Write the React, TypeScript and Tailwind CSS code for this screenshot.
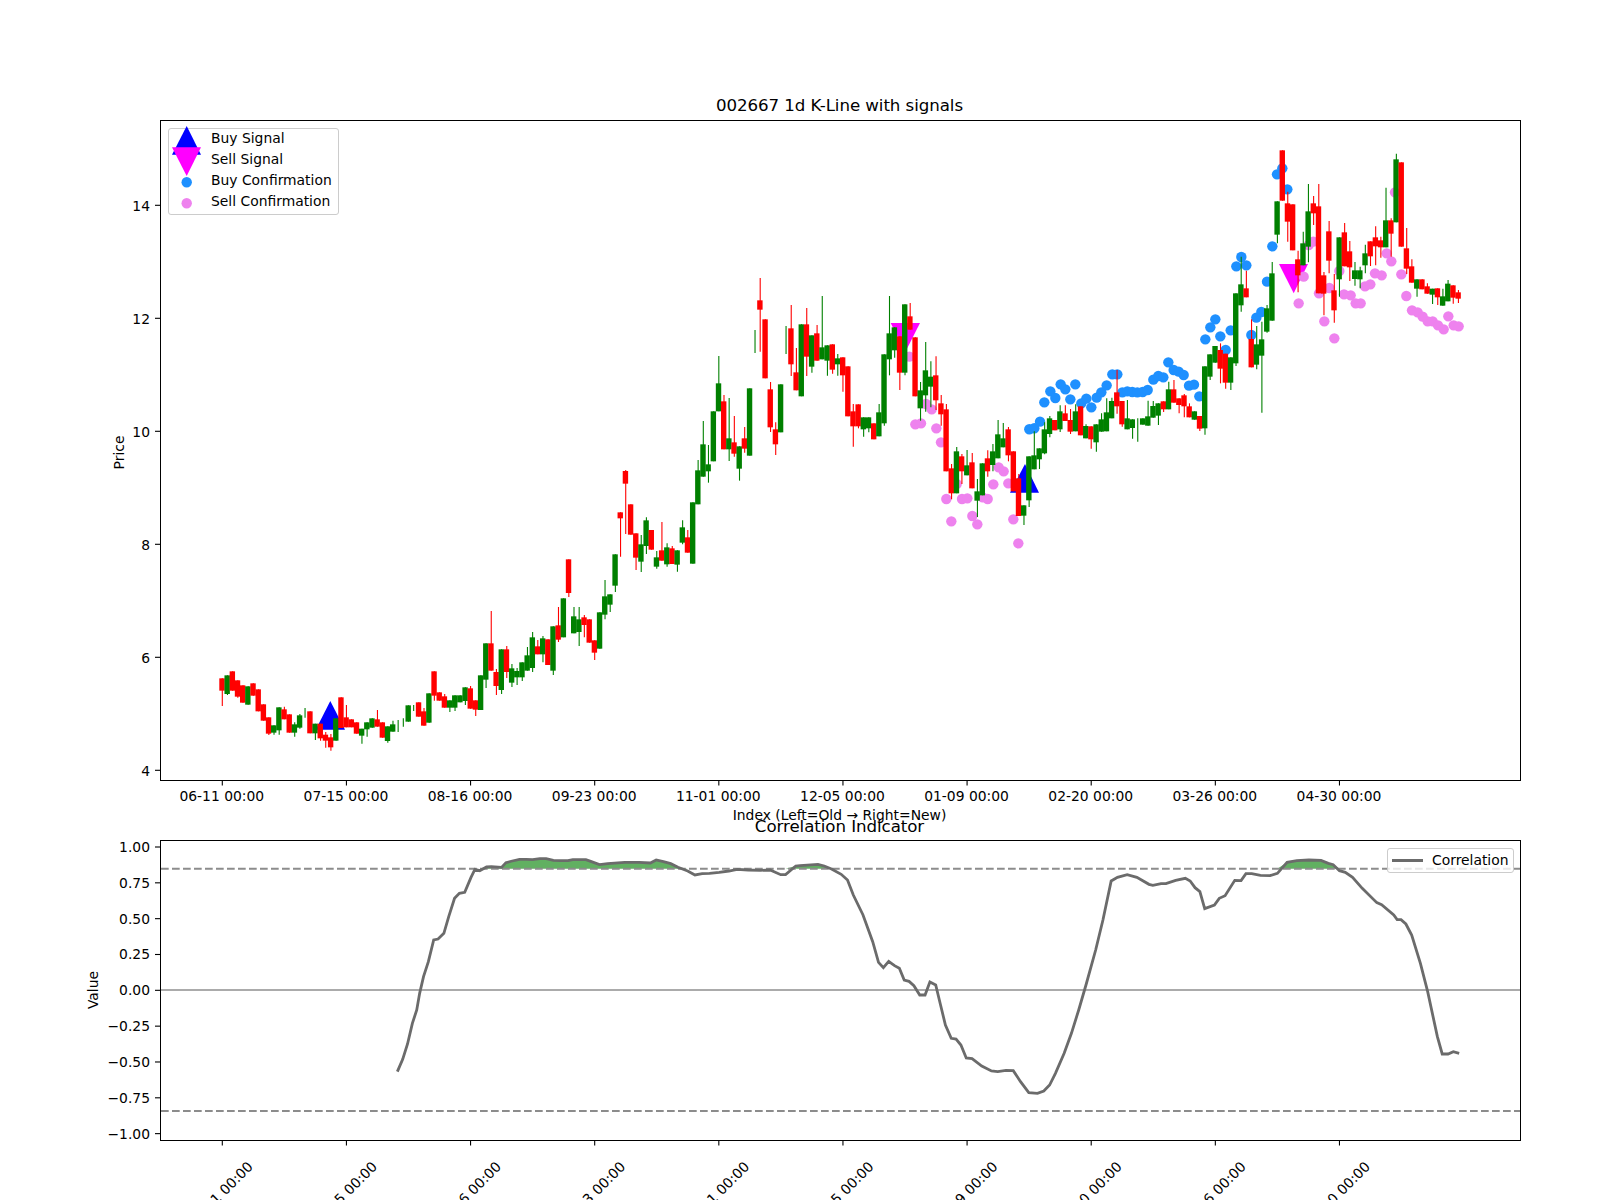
type Bar = [string, number, number, number, number];

// readings per crop: colour, body top, body bottom, wick top, wick bottom (0 = wick ends at the body)
const BARS_A: Bar[] = [
  ['r',715,752,0,798],['g',706,762,0,765],['r',694,752,0,0],['r',721,770,0,773],['r',736,788,0,0],['g',739,794,0,0],
  ['r',730,767,0,0],['r',748,814,0,0],['r',793,842,0,0],['r',832,881,0,885],['g',856,878,0,884],['g',802,871,0,884],
  ['r',808,838,800,0],['r',823,878,0,0],['g',853,878,847,890],['g',826,863,822,866],['g',0,0,804,833],['r',814,880,0,0],
  ['g',851,880,0,900],['r',851,895,0,902],['r',884,902,876,923],['r',892,922,882,932],['g',835,902,0,0],['r',772,864,0,0],
  ['r',832,862,795,0],['r',838,862,0,0],['r',847,881,0,0],['g',866,887,0,911],['g',847,868,0,890],['g',835,863,0,0],
  ['r',838,860,810,0],['r',847,893,0,0],['g',859,903,0,908],['g',853,875,842,0],['g',0,0,840,876],['g',0,0,835,860],
  ['g',796,845,0,0],['g',0,0,795,813],['r',787,830,0,0],['r',814,857,804,0],['g',760,848,0,0],['r',694,767,0,782],
  ['r',757,782,0,0],['r',769,803,762,0],['g',781,803,0,816],['g',766,803,0,813],['g',766,787,0,0],['g',742,783,0,795],
  ['r',745,806,738,0],['r',781,809,0,828],['g',706,810,0,0],['g',610,719,0,744],['r',610,692,513,0],['r',696,738,687,765],
  ['g',628,750,0,762],['r',628,696,618,714],['g',685,728,672,741],['g',693,712,684,735],['g',667,712,0,723],['g',646,692,621,0],
  ['g',592,684,576,696],['r',619,643,600,0],['g',595,643,588,667],['r',598,675,0,0],['g',559,692,0,705],['r',556,599,501,606],
  ['g',475,592,0,0],['r',358,459,0,471],['g',529,580,501,0],['g',538,576,501,618],['r',532,555,525,592],['r',538,608,0,0],
  ['r',601,638,0,660],['g',517,626,0,0],['g',469,524,420,538],['g',463,494,0,516],['g',343,437,0,456],['r',217,235,0,350],
  ['r',93,131,90,282],['r',193,284,0,0],['r',280,353,0,390],['g',313,365,285,396],['g',241,318,232,342],['r',270,329,0,0],
];

const BARS_B: Bar[] = [
  ['g',892,920,873,926],['r',871,902,786,0],['g',862,913,850,920],['r',865,912,858,0],['g',871,914,0,935],['g',802,848,781,853],
  ['r',832,878,810,0],['g',727,911,0,0],['g',631,733,600,0],['g',553,650,483,0],['g',613,634,555,668],['g',454,604,0,0],
  ['g',370,454,288,0],['r',424,568,405,0],['g',535,568,414,603],['r',547,581,468,590],['g',559,626,0,662],['r',535,566,501,578],
  ['g',385,587,0,0],['g',0,0,210,279],['r',121,149,54,275],['r',178,355,0,0],['r',388,502,366,516],['r',508,553,487,585],
  ['g',373,517,0,0],['g',0,0,198,282],['r',205,313,135,348],['r',337,391,264,0],['g',193,409,0,0],['r',193,290,144,348],
  ['g',226,320,0,338],['r',220,302,195,0],['g',262,298,108,0],['g',256,302,0,347],['r',253,329,0,341],['g',295,313,282,347],
  ['r',292,346,0,395],['r',319,469,0,0],['r',454,499,432,560],['r',433,499,0,505],['g',472,508,0,530],['g',472,505,0,517],
  ['r',490,538,0,0],['g',457,529,432,0],['g',283,490,0,497],['g',220,298,108,346],['g',202,271,0,293],['r',229,338,0,390],
  ['g',133,338,0,346],['r',169,209,129,0],['r',232,409,0,0],['g',391,445,366,482],['g',331,406,246,455],['g',350,380,304,442],
  ['r',346,421,289,450],['r',430,463,405,497],['r',448,634,432,0],['r',625,700,612,718],['g',574,700,561,0],['r',589,634,582,672],
  ['g',616,646,570,0],['r',607,685,579,0],['g',694,722,657,771],['g',610,706,0,0],['r',595,634,571,650],['g',574,615,552,634],
  ['g',523,595,480,0],['g',535,562,489,0],['r',508,586,501,604],['r',574,694,0,0],['r',655,768,642,0],['g',736,767,0,795],
  ['g',589,721,0,741],['g',586,628,514,0],['g',565,598,0,627],['g',508,580,487,583],
];

const BARS_C: Bar[] = [
  ['g',865,912,858,922],['r',870,901,0,0],['g',844,898,826,906],['r',850,873,826,0],['r',870,905,837,912],['g',844,904,823,0],
  ['r',829,916,0,0],['g',888,925,883,0],['r',889,928,0,956],['g',883,937,0,965],['g',868,905,850,0],['g',847,904,805,0],
  ['g',813,865,803,0],['r',787,829,720,851],['r',813,883,0,890],['g',865,898,810,0],['g',868,894,0,926],['g',0,0,865,935],
  ['g',865,884,0,0],['g',859,887,812,0],['g',828,863,813,0],['g',820,857,0,885],['r',814,838,0,846],['g',778,838,755,0],
  ['r',778,818,750,0],['r',805,825,0,850],['r',796,829,792,862],['r',829,862,820,0],['g',844,869,0,0],['r',858,896,0,903],
  ['g',709,895,0,914],['g',673,740,0,750],['g',648,698,0,0],['r',660,716,640,760],['r',671,758,0,776],['g',682,758,0,780],
  ['g',490,700,0,708],['g',463,526,380,545],['r',475,502,422,0],['r',627,712,568,0],['g',643,704,588,718],['g',628,677,575,848],
  ['g',535,605,525,608],['g',430,572,396,0],['g',214,314,0,340],['r',61,212,0,0],['r',220,275,185,335],['r',223,361,0,0],
  ['r',388,436,362,487],['g',340,406,305,0],['g',244,350,162,397],['r',220,250,198,285],['r',229,490,162,0],['r',436,491,426,556],
  ['r',304,392,273,430],['r',481,541,432,578],['g',322,448,0,500],['r',307,409,279,0],['r',364,412,333,453],['g',421,447,396,467],
  ['g',421,448,410,475],['g',370,406,344,430],['r',334,379,0,408],['r',322,349,289,406],['r',331,352,320,383],['g',271,352,173,0],
  ['r',271,311,265,380],['g',88,277,71,0],['r',97,350,0,0],['r',355,416,294,432],['r',409,458,388,0],['g',448,476,0,500],
  ['r',448,478,0,0],['r',469,491,460,0],['g',476,494,0,522],['r',475,502,0,525],['g',499,527,476,0],['g',461,514,450,0],
  ['r',466,503,0,521],['r',487,506,480,519],
];

const fromCrop = (rows: Bar[], top: number): Bar[] =>
  rows.map(([c, a, b, w1, w2]) => {
    const y = (v: number) => top + v / 3;
    return [c, y(a), y(b), y(w1 || a), y(w2 || b)];
  });

const bars = [...fromCrop(BARS_A, 440), ...fromCrop(BARS_B, 260), ...fromCrop(BARS_C, 130)];
const barX = (i: number) => 222.3 + (124.13 / 24) * i;

const BLUE_DOTS: number[][] = [
  [1029.3,429.3],[1034.3,428.3],
  ...[[0,875],[13,817],[31,784],[46,804],[62,763],[76,778],[91,808],[106,763],[124,820],[139,806],[154,832],[170,803],[184,787],[200,766],
    [217,733],[232,733],[247,787],[262,784],[277,786],[292,787],[308,786],[323,780],[340,749],[355,738],[370,742],[385,697],[401,720],[416,725],
    [431,735],[447,767],[462,764],[478,799],[496,628],[511,592],[526,568],[541,619],[557,660],[572,601],[589,409],[604,381],[619,406],[634,615],
    [649,563],[664,546],[681,455],[697,349],[711,133],[727,115],[742,178]].map(([x, y]) => [1040 + x / 3, 130 + y / 3]),
];

const VIOLET_DOTS: number[][] = [
  ...[[808,290],[858,432],[875,448],[826,493],[843,490],[889,505],[903,547],[919,717],[950,672],[934,784],[966,717],[982,715],[997,768],[1012,793],
    [1028,712],[1043,717],[1060,673],[1076,622],[1091,634],[1105,670],[1120,778],[1135,850]].map(([x, y]) => [640 + x / 3, 260 + y / 3]),
  ...[[791,440],[776,520],[806,345],[820,335],[837,490],[853,574],[868,474],[883,625],[898,423],[912,493],[932,496],[947,520],[962,520],[975,469],
    [991,463],[1005,430],[1025,436],[1040,370],[1054,394],[1065,187],[1084,433],[1099,498],[1116,541],[1133,547],[1148,560],[1163,574],[1178,574],
    [1194,586],[1211,598],[1225,559],[1241,586],[1256,589]].map(([x, y]) => [1040 + x / 3, 130 + y / 3]),
];

const CORR_LEFT = [
  [696,755],[707,718],[717,672],[727,610],[736,570],[742,520],[750,470],[760,425],[771,360],[780,357],[792,340],[802,290],[814,235],[824,220],[835,217],
  [848,172],[856,148],[866,152],[880,141],[890,140],[911,142],[920,128],[933,123],[948,118],[962,118],[975,119],[990,116],[1003,116],[1018,121],[1034,122],
  [1048,122],[1058,119],[1085,119],[1095,124],[1113,134],[1130,131],[1165,127],[1195,127],[1218,129],[1230,120],[1245,125],[1260,131],[1275,142],[1295,153],
  [1310,165],[1325,161],[1340,160],[1360,157],[1380,153],[1397,148],[1420,150],[1445,151],[1465,150],[1487,164],[1497,164],[1518,138],
];

const CORR_RIGHT = [
  [0,137],[37,133],[50,138],[65,147],[85,163],[98,180],[110,225],[130,285],[150,365],[162,427],[172,443],[183,424],[195,437],[205,445],[215,480],[225,484],
  [235,497],[247,525],[258,525],[268,486],[280,495],[290,555],[300,615],[312,655],[322,657],[332,675],[343,714],[355,716],[375,738],[395,753],[408,755],
  [425,751],[440,752],[455,785],[472,818],[490,820],[503,813],[515,795],[527,760],[545,700],[560,640],[575,570],[590,495],[610,390],[625,300],[642,183],
  [655,172],[675,164],[695,172],[720,193],[728,196],[745,191],[755,191],[775,181],[795,175],[805,183],[815,203],[825,215],[835,266],[855,255],[865,235],
  [877,227],[897,181],[910,182],[920,161],[932,161],[950,166],[970,167],[985,160],[1005,127],[1025,122],[1050,120],[1075,121],[1090,130],[1100,134],[1113,152],
  [1125,157],[1140,172],[1160,205],[1190,248],[1200,254],[1225,285],[1232,299],[1240,299],[1250,312],[1262,345],[1280,430],[1295,515],[1315,650],[1325,702],
  [1337,702],[1348,695],[1360,700],
];

const SCALE_X = 1568 / 760;
const corr = [
  ...CORR_LEFT.map(([x, y]) => [60 + x / SCALE_X, 820 + y / 3]),
  ...CORR_RIGHT.map(([x, y]) => [800 + x / SCALE_X, 820 + y / 3]),
];
const HIGH_Y = 868.8;
const LOW_Y = 1111;
const corrLine = corr.map(([x, y]) => `${x},${y}`).join(' ');
const corrFill = corr.map(([x, y]) => `${x},${Math.min(y, HIGH_Y)}`).join(' ');

const DATES = ['06-11', '07-15', '08-16', '09-23', '11-01', '12-05', '01-09', '02-20', '03-26', '04-30'];
const tickX = (i: number) => 222.3 + 124.13 * i;
const PRICE_TICKS = [14, 12, 10, 8, 6, 4];
const VALUE_TICKS = ['1.00', '0.75', '0.50', '0.25', '0.00', '−0.25', '−0.50', '−0.75', '−1.00'];

function CandleChart() {
  return (
    <svg className="block overflow-visible" width={1359} height={659} viewBox="161 121 1359 659">
      <polygon points="315.7,729.7 345,729.7 330.3,701" fill="#0000ff" />
      <polygon points="1010,492.7 1039,492.7 1025,464" fill="#0000ff" />
      <polygon points="890.7,323 920,323 905.3,352" fill="#ff00ff" />
      <polygon points="1279,264 1308,264 1293.7,293.3" fill="#ff00ff" />
      {BLUE_DOTS.map(([x, y], i) => <circle key={i} cx={x} cy={y} r={5.2} fill="#1e90ff" />)}
      {VIOLET_DOTS.map(([x, y], i) => <circle key={i} cx={x} cy={y} r={5.2} fill="#ee82ee" />)}
      {bars.map(([c, top, bot, w1, w2], i) => {
        const color = c === 'r' ? '#ff0000' : '#008000';
        return (
          <g key={i}>
            <line x1={barX(i)} x2={barX(i)} y1={w1} y2={w2} stroke={color} strokeWidth={1.1} />
            {bot > top && <rect x={barX(i) - 3} y={top} width={5.4} height={bot - top} fill={color} />}
          </g>
        );
      })}
      {DATES.map((d, i) => (
        <g key={d}>
          <line x1={tickX(i)} x2={tickX(i)} y1={780.5} y2={785.5} stroke="#000" strokeWidth={1.1} />
          <text x={tickX(i) - 0.5} y={801} textAnchor="middle" fontSize={13.89}>{d} 00:00</text>
        </g>
      ))}
      {PRICE_TICKS.map((p) => {
        const y = 770.3 - (p - 4) * 56.5;
        return (
          <g key={p}>
            <line x1={155} x2={160} y1={y} y2={y} stroke="#000" strokeWidth={1.1} />
            <text x={150} y={y + 5.5} textAnchor="end" fontSize={13.89}>{p}</text>
          </g>
        );
      })}
      <text transform="translate(124 452.5) rotate(-90)" textAnchor="middle" fontSize={13.89}>Price</text>
    </svg>
  );
}

function CorrelationChart() {
  return (
    <svg className="block overflow-visible" width={1359} height={299} viewBox="161 841 1359 299">
      <polygon points={corrFill} fill="#008000" fillOpacity={0.62} />
      <line x1={161} x2={1520} y1={HIGH_Y} y2={HIGH_Y} stroke="#8c8c8c" strokeWidth={2} strokeDasharray="7.7 3.3" />
      <line x1={161} x2={1520} y1={LOW_Y} y2={LOW_Y} stroke="#8c8c8c" strokeWidth={2} strokeDasharray="7.7 3.3" />
      <line x1={161} x2={1520} y1={990} y2={990} stroke="#ababab" strokeWidth={2} />
      <polyline points={corrLine} fill="none" stroke="#6b6b6b" strokeWidth={2.8} />
      {DATES.map((d, i) => (
        <g key={d}>
          <line x1={tickX(i)} x2={tickX(i)} y1={1140.5} y2={1145.5} stroke="#000" strokeWidth={1.1} />
          <text transform={`translate(${tickX(i) - 2} 1194) rotate(-45)`} textAnchor="middle" dominantBaseline="central" fontSize={13.89}>{d} 00:00</text>
        </g>
      ))}
      {VALUE_TICKS.map((v, i) => {
        const y = 847 + i * 35.83;
        return (
          <g key={v}>
            <line x1={155} x2={160} y1={y} y2={y} stroke="#000" strokeWidth={1.1} />
            <text x={150} y={y + 5} textAnchor="end" fontSize={13.89}>{v}</text>
          </g>
        );
      })}
      <text transform="translate(98 990) rotate(-90)" textAnchor="middle" fontSize={13.89}>Value</text>
    </svg>
  );
}

export default function App() {
  return (
    <div className="w-[1600px] h-[1200px] overflow-hidden bg-white pt-[96px] pl-[160px] text-black text-[13.89px] font-['DejaVu_Sans',sans-serif]">
      <h2 className="w-[1359px] text-center text-[16.67px] tracking-[-0.07px] leading-[20px] mb-[4px]">002667 1d K-Line with signals</h2>

      <div className="relative w-[1361px] h-[661px] border border-black">
        <CandleChart />
        <div className="absolute left-[7px] top-[7px] w-[171px] h-[87px] rounded-[3px] border border-[#cccccc] bg-white/80">
          <svg className="absolute left-0 top-0 overflow-visible" width={169} height={85} viewBox="169 129 169 85">
            <polygon points="172,154.7 201,154.7 186.7,126" fill="#0000ff" />
            <polygon points="172,147.3 201,147.3 186.7,176" fill="#ff00ff" />
            <circle cx={186.7} cy={182.3} r={5.2} fill="#1e90ff" />
            <circle cx={186.7} cy={203.3} r={5.2} fill="#ee82ee" />
          </svg>
          <div className="relative flex flex-col pl-[42px] mt-[-1px] leading-[21px]">
            <span>Buy Signal</span>
            <span>Sell Signal</span>
            <span>Buy Confirmation</span>
            <span>Sell Confirmation</span>
          </div>
        </div>
      </div>

      <p className="w-[1359px] text-center mt-[25px] leading-[18px]">Index (Left=Old → Right=New)</p>
      <h2 className="w-[1359px] text-center text-[16.67px] tracking-[-0.07px] leading-[20px] mt-[-7px] mb-[3px]">Correlation Indicator</h2>

      <div className="relative w-[1361px] h-[301px] border border-black">
        <CorrelationChart />
        <div className="absolute right-[6px] top-[7px] flex h-[25px] w-[127px] items-center gap-[9px] rounded-[3px] border border-[#cccccc] bg-white/80 pl-[4px]">
          <svg width={31} height={3}>
            <line x1={0} x2={31} y1={1.5} y2={1.5} stroke="#6b6b6b" strokeWidth={3} />
          </svg>
          <span>Correlation</span>
        </div>
      </div>
    </div>
  );
}
